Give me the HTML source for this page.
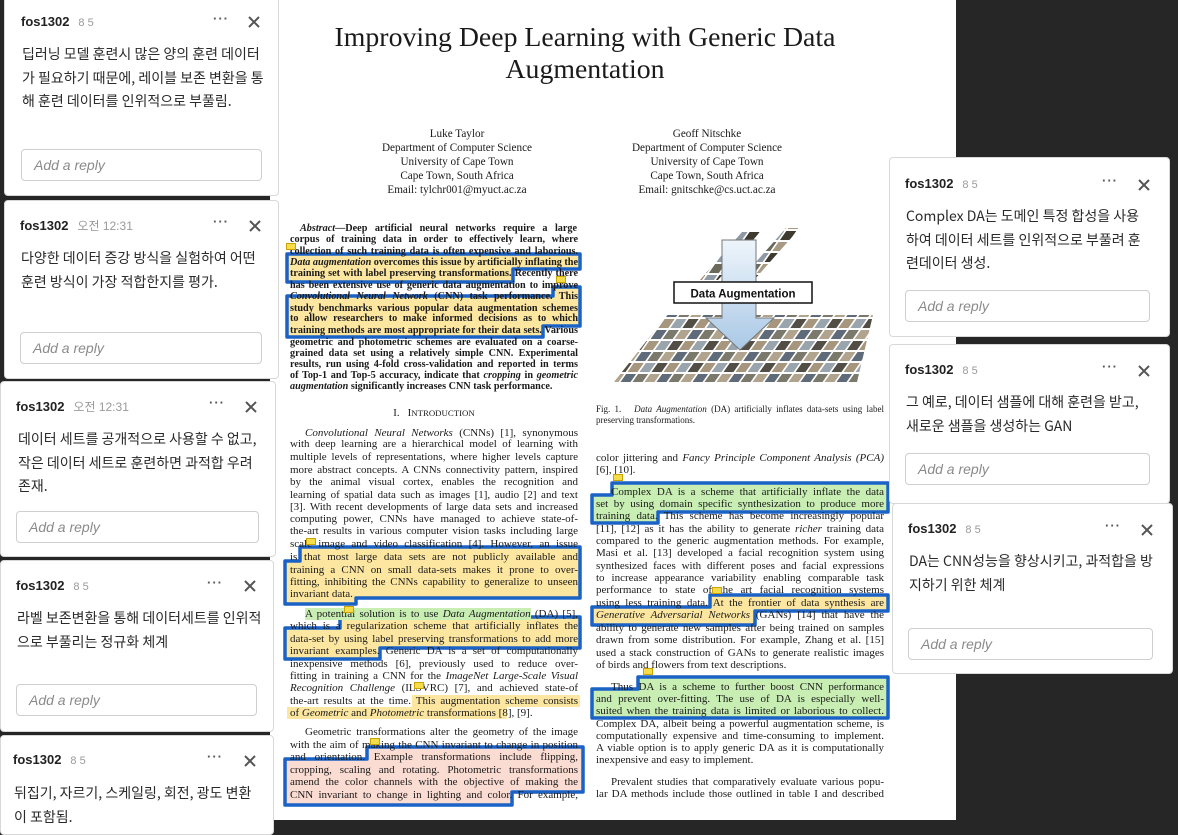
<!DOCTYPE html>
<html><head><meta charset="utf-8">
<style>
*{margin:0;padding:0;box-sizing:border-box}
body{width:1178px;height:820px;overflow:hidden;background:#262626;position:relative;font-family:"Liberation Serif",serif;color:#111}
#paper{position:absolute;left:270px;top:0;width:686px;height:820px;background:#fff}
.l{position:absolute;width:288px;height:14px;font-size:11px;line-height:12px;white-space:nowrap;text-align:justify;text-align-last:justify;color:#1a1a1a;z-index:3}
.l.n{text-align-last:left}
.b{font-weight:bold;font-size:10.2px}
.c{position:absolute;text-align:center;font-size:11.2px;line-height:14px;color:#1a1a1a;z-index:3}
.card{position:absolute;background:#fff;border:1px solid #d8d8d8;border-radius:4px;z-index:5;font-family:"Liberation Sans","Noto Sans CJK KR",sans-serif}
.nm{position:absolute;font-weight:bold;font-size:13px;color:#222}
.nm span{font-weight:normal;font-size:11px;color:#9a9a9a;margin-left:9px}
.dots{position:absolute;font-size:13px;color:#555;letter-spacing:1px;font-weight:bold}
.x{position:absolute;width:12px;height:12px}
.tx{position:absolute;font-family:"Noto Sans CJK KR","Liberation Sans",sans-serif;font-size:14px;line-height:23.5px;color:#2a2a2a;width:245px !important;word-break:break-all}
.rp{position:absolute;border:1px solid #cfcfcf;border-radius:4px;height:32px;font-size:14px;font-style:italic;color:#8a8a8a;padding:7px 0 0 12px}
.note{position:absolute;width:10px;height:7px;background:#f4dc4a;border:1px solid #c9a400;z-index:4}
</style></head><body>
<div id="paper"></div>

<svg width="1178" height="820" style="position:absolute;left:0;top:0;z-index:2">
<defs>
<pattern id="tp" width="36" height="22" patternUnits="userSpaceOnUse" patternTransform="skewX(-35)">
<rect x="0" y="0" width="10" height="9" fill="#6b6a5a"/><rect x="12" y="0" width="10" height="9" fill="#a89a82"/><rect x="24" y="0" width="10" height="9" fill="#4e5a6a"/>
<rect x="0" y="11" width="10" height="9" fill="#8f9aa4"/><rect x="12" y="11" width="10" height="9" fill="#3f3a30"/><rect x="24" y="11" width="10" height="9" fill="#9c8a6e"/>
</pattern>
<linearGradient id="ag" x1="0" y1="0" x2="0" y2="1"><stop offset="0" stop-color="#eef5fb"/><stop offset="1" stop-color="#a9c8e6"/></linearGradient>
</defs>
<g stroke="#1a62c6" stroke-width="3.5" stroke-linejoin="round">
<path d="M287,254 H580 V269 H513 V282 H287 Z" fill="#fde7a0"/>
<path d="M553,287 H580 V326 H543 V337 H287 V296 H553 Z" fill="#fde7a0"/>
<path d="M300,547 H580 V598 H356 V604 H285 V561 H300 Z" fill="#fde7a0"/>
<path d="M340,617 H580 V648 H380 V659 H285 V628 H340 Z" fill="#fde7a0"/>
<path d="M367,747 H583 V792 H512 V805 H285 V759 H367 Z" fill="#fbdcd2"/>
<path d="M612,483 H888 V512 H658 V523 H592 V495 H612 Z" fill="#c8eeb4"/>
<path d="M710,595 H888 V611 H755 V625 H592 V607 H710 Z" fill="#fde7a0"/>
<path d="M638,677 H888 V718 H592 V689 H638 Z" fill="#c8eeb4"/>
</g>
<rect x="305" y="608" width="226" height="12" fill="#c8eeb4"/>
<rect x="412" y="695" width="168" height="12" fill="#fde7a0"/>
<rect x="287" y="707" width="220" height="12" fill="#fde7a0"/>
<polygon points="614,382 857,382 873,315 667,315" fill="url(#tp)" opacity="0.9"/>
<polygon points="700,280 742,232 760,232 718,280" fill="url(#tp)"/>
<polygon points="740,280 786,228 800,228 754,280" fill="url(#tp)"/>
<polygon points="722,240 756,240 756,318 774,318 740,350 706,318 722,318 Z" fill="url(#ag)" stroke="#777" stroke-width="1"/>
<rect x="674" y="282" width="138" height="21" fill="#fff" stroke="#111" stroke-width="1.5"/>
<text x="743" y="297.5" text-anchor="middle" font-family="Liberation Sans" font-weight="bold" font-size="11.5" fill="#111">Data Augmentation</text>
</svg>

<div class="note" style="left:286px;top:243px"></div>
<div class="note" style="left:556px;top:276px"></div>
<div class="note" style="left:306px;top:538px"></div>
<div class="note" style="left:344px;top:606px"></div>
<div class="note" style="left:414px;top:682px"></div>
<div class="note" style="left:370px;top:738px"></div>
<div class="note" style="left:613px;top:474px"></div>
<div class="note" style="left:712px;top:587px"></div>
<div class="note" style="left:643px;top:668px"></div>

<div class="c" style="left:285px;top:22px;width:600px;font-size:27.8px;line-height:32px">Improving Deep Learning with Generic Data<br>Augmentation</div>
<div class="c" style="left:352px;top:127px;width:210px">Luke Taylor<br>Department of Computer Science<br>University of Cape Town<br>Cape Town, South Africa<br>Email: tylchr001@myuct.ac.za</div>
<div class="c" style="left:602px;top:127px;width:210px">Geoff Nitschke<br>Department of Computer Science<br>University of Cape Town<br>Cape Town, South Africa<br>Email: gnitschke@cs.uct.ac.za</div>

<div class="l b" style="left:300px;top:223px;width:277px"><i>Abstract</i>—Deep artificial neural networks require a large</div>
<div class="l b" style="left:290px;top:234px">corpus of training data in order to effectively learn, where</div>
<div class="l b" style="left:290px;top:246px">collection of such training data is often expensive and laborious.</div>
<div class="l b" style="left:290px;top:257px"><i>Data augmentation</i> overcomes this issue by artificially inflating the</div>
<div class="l b" style="left:290px;top:268px">training set with label preserving transformations. Recently there</div>
<div class="l b" style="left:290px;top:280px">has been extensive use of generic data augmentation to improve</div>
<div class="l b" style="left:290px;top:291px"><i>Convolutional Neural Network</i> (CNN) task performance. This</div>
<div class="l b" style="left:290px;top:303px">study benchmarks various popular data augmentation schemes</div>
<div class="l b" style="left:290px;top:313px">to allow researchers to make informed decisions as to which</div>
<div class="l b" style="left:290px;top:325px">training methods are most appropriate for their data sets. Various</div>
<div class="l b" style="left:290px;top:337px">geometric and photometric schemes are evaluated on a coarse-</div>
<div class="l b" style="left:290px;top:348px">grained data set using a relatively simple CNN. Experimental</div>
<div class="l b" style="left:290px;top:359px">results, run using 4-fold cross-validation and reported in terms</div>
<div class="l b" style="left:290px;top:370px">of Top-1 and Top-5 accuracy, indicate that <i>cropping</i> in <i>geometric</i></div>
<div class="l b n" style="left:290px;top:381px"><i>augmentation</i> significantly increases CNN task performance.</div>

<div class="c" style="left:334px;top:406px;width:200px;font-size:10.8px">I.&nbsp;&nbsp;&nbsp;I<span style="font-size:8.8px">NTRODUCTION</span></div>

<div class="l" style="left:305px;top:427px;width:273px"><i>Convolutional Neural Networks</i> (CNNs) [1], synonymous</div>
<div class="l" style="left:290px;top:438px">with deep learning are a hierarchical model of learning with</div>
<div class="l" style="left:290px;top:451px">multiple levels of representations, where higher levels capture</div>
<div class="l" style="left:290px;top:464px">more abstract concepts. A CNNs connectivity pattern, inspired</div>
<div class="l" style="left:290px;top:476px">by the animal visual cortex, enables the recognition and</div>
<div class="l" style="left:290px;top:489px">learning of spatial data such as images [1], audio [2] and text</div>
<div class="l" style="left:290px;top:501px">[3]. With recent developments of large data sets and increased</div>
<div class="l" style="left:290px;top:513px">computing power, CNNs have managed to achieve state-of-</div>
<div class="l" style="left:290px;top:525px">the-art results in various computer vision tasks including large</div>
<div class="l" style="left:290px;top:538px">scale image and video classification [4]. However, an issue</div>
<div class="l" style="left:290px;top:551px">is that most large data sets are not publicly available and</div>
<div class="l" style="left:290px;top:564px">training a CNN on small data-sets makes it prone to over-</div>
<div class="l" style="left:290px;top:576px">fitting, inhibiting the CNNs capability to generalize to unseen</div>
<div class="l n" style="left:290px;top:588px">invariant data.</div>
<div class="l" style="left:305px;top:608px;width:273px">A potential solution is to use <i>Data Augmentation</i> (DA) [5],</div>
<div class="l" style="left:290px;top:620px">which is a regularization scheme that artificially inflates the</div>
<div class="l" style="left:290px;top:633px">data-set by using label preserving transformations to add more</div>
<div class="l" style="left:290px;top:645px">invariant examples. Generic DA is a set of computationally</div>
<div class="l" style="left:290px;top:658px">inexpensive methods [6], previously used to reduce over-</div>
<div class="l" style="left:290px;top:670px">fitting in training a CNN for the <i>ImageNet Large-Scale Visual</i></div>
<div class="l" style="left:290px;top:682px"><i>Recognition Challenge</i> (ILSVRC) [7], and achieved state-of</div>
<div class="l" style="left:290px;top:695px">the-art results at the time. This augmentation scheme consists</div>
<div class="l n" style="left:290px;top:707px">of <i>Geometric</i> and <i>Photometric</i> transformations [8], [9].</div>
<div class="l" style="left:305px;top:726px;width:273px">Geometric transformations alter the geometry of the image</div>
<div class="l" style="left:290px;top:739px">with the aim of making the CNN invariant to change in position</div>
<div class="l" style="left:290px;top:751px">and orientation. Example transformations include flipping,</div>
<div class="l" style="left:290px;top:764px">cropping, scaling and rotating. Photometric transformations</div>
<div class="l" style="left:290px;top:776px">amend the color channels with the objective of making the</div>
<div class="l" style="left:290px;top:789px">CNN invariant to change in lighting and color. For example,</div>

<div class="l" style="left:596px;top:404px;font-size:9px;line-height:11px">Fig. 1.&nbsp;&nbsp;&nbsp;<i>Data Augmentation</i> (DA) artificially inflates data-sets using label</div>
<div class="l n" style="left:596px;top:415px;font-size:9px;line-height:11px">preserving transformations.</div>

<div class="l" style="left:596px;top:452px">color jittering and <i>Fancy Principle Component Analysis (PCA)</i></div>
<div class="l n" style="left:596px;top:464px">[6], [10].</div>
<div class="l" style="left:611px;top:486px;width:273px">Complex DA is a scheme that artificially inflate the data</div>
<div class="l" style="left:596px;top:498px">set by using domain specific synthesization to produce more</div>
<div class="l" style="left:596px;top:510px">training data. This scheme has become increasingly popular</div>
<div class="l" style="left:596px;top:523px">[11], [12] as it has the ability to generate <i>richer</i> training data</div>
<div class="l" style="left:596px;top:535px">compared to the generic augmentation methods. For example,</div>
<div class="l" style="left:596px;top:547px">Masi et al. [13] developed a facial recognition system using</div>
<div class="l" style="left:596px;top:560px">synthesized faces with different poses and facial expressions</div>
<div class="l" style="left:596px;top:572px">to increase appearance variability enabling comparable task</div>
<div class="l" style="left:596px;top:584px">performance to state of the art facial recognition systems</div>
<div class="l" style="left:596px;top:597px">using less training data. At the frontier of data synthesis are</div>
<div class="l" style="left:596px;top:609px"><i>Generative Adversarial Networks</i> (GANs) [14] that have the</div>
<div class="l" style="left:596px;top:622px">ability to generate new samples after being trained on samples</div>
<div class="l" style="left:596px;top:634px">drawn from some distribution. For example, Zhang et al. [15]</div>
<div class="l" style="left:596px;top:647px">used a stack construction of GANs to generate realistic images</div>
<div class="l n" style="left:596px;top:659px">of birds and flowers from text descriptions.</div>
<div class="l" style="left:611px;top:681px;width:273px">Thus DA is a scheme to further boost CNN performance</div>
<div class="l" style="left:596px;top:693px">and prevent over-fitting. The use of DA is especially well-</div>
<div class="l" style="left:596px;top:705px">suited when the training data is limited or laborious to collect.</div>
<div class="l" style="left:596px;top:718px">Complex DA, albeit being a powerful augmentation scheme, is</div>
<div class="l" style="left:596px;top:730px">computationally expensive and time-consuming to implement.</div>
<div class="l" style="left:596px;top:742px">A viable option is to apply generic DA as it is computationally</div>
<div class="l n" style="left:596px;top:754px">inexpensive and easy to implement.</div>
<div class="l" style="left:611px;top:776px;width:273px">Prevalent studies that comparatively evaluate various popu-</div>
<div class="l" style="left:596px;top:788px">lar DA methods include those outlined in table I and described</div>

<div class="card" style="left:4px;top:-4px;width:275px;height:200px">
 <div class="nm" style="left:16px;top:17px">fos1302<span>8 5</span></div>
 <div class="dots" style="left:208px;top:14px">···</div>
 <svg class="x" style="left:243px;top:19px" viewBox="0 0 12 12"><path d="M1,1 L11,11 M11,1 L1,11" stroke="#555" stroke-width="2"/></svg>
 <div class="tx" style="left:17px;top:46px">딥러닝 모델 훈련시 많은 양의 훈련 데이터가 필요하기 때문에, 레이블 보존 변환을 통해 훈련 데이터를 인위적으로 부풀림.</div>
 <div class="rp" style="left:16px;top:152px;width:241px">Add a reply</div>
</div>
<div class="card" style="left:4px;top:200px;width:275px;height:179px">
 <div class="nm" style="left:15px;top:16px">fos1302<span style="font-size:12px">오전 12:31</span></div>
 <div class="dots" style="left:208px;top:13px">···</div>
 <svg class="x" style="left:244px;top:19px" viewBox="0 0 12 12"><path d="M1,1 L11,11 M11,1 L1,11" stroke="#555" stroke-width="2"/></svg>
 <div class="tx" style="left:16px;top:46px">다양한 데이터 증강 방식을 실험하여 어떤 훈련 방식이 가장 적합한지를 평가.</div>
 <div class="rp" style="left:15px;top:131px;width:242px">Add a reply</div>
</div>
<div class="card" style="left:0px;top:381px;width:276px;height:176px">
 <div class="nm" style="left:15px;top:16px">fos1302<span style="font-size:12px">오전 12:31</span></div>
 <div class="dots" style="left:208px;top:13px">···</div>
 <svg class="x" style="left:244px;top:19px" viewBox="0 0 12 12"><path d="M1,1 L11,11 M11,1 L1,11" stroke="#555" stroke-width="2"/></svg>
 <div class="tx" style="left:17px;top:46px">데이터 세트를 공개적으로 사용할 수 없고, 작은 데이터 세트로 훈련하면 과적합 우려 존재.</div>
 <div class="rp" style="left:15px;top:129px;width:243px">Add a reply</div>
</div>
<div class="card" style="left:0px;top:560px;width:274px;height:172px">
 <div class="nm" style="left:15px;top:17px">fos1302<span>8 5</span></div>
 <div class="dots" style="left:206px;top:14px">···</div>
 <svg class="x" style="left:243px;top:19px" viewBox="0 0 12 12"><path d="M1,1 L11,11 M11,1 L1,11" stroke="#555" stroke-width="2"/></svg>
 <div class="tx" style="left:16px;top:46px">라벨 보존변환을 통해 데이터세트를 인위적으로 부풀리는 정규화 체계</div>
 <div class="rp" style="left:15px;top:123px;width:241px">Add a reply</div>
</div>
<div class="card" style="left:0px;top:735px;width:274px;height:100px">
 <div class="nm" style="left:12px;top:16px">fos1302<span>8 5</span></div>
 <div class="dots" style="left:206px;top:13px">···</div>
 <svg class="x" style="left:243px;top:19px" viewBox="0 0 12 12"><path d="M1,1 L11,11 M11,1 L1,11" stroke="#555" stroke-width="2"/></svg>
 <div class="tx" style="left:13px;top:46px">뒤집기, 자르기, 스케일링, 회전, 광도 변환이 포함됨.</div>
</div>

<div class="card" style="left:889px;top:157px;width:281px;height:180px">
 <div class="nm" style="left:15px;top:18px">fos1302<span>8 5</span></div>
 <div class="dots" style="left:212px;top:15px">···</div>
 <svg class="x" style="left:248px;top:21px" viewBox="0 0 12 12"><path d="M1,1 L11,11 M11,1 L1,11" stroke="#555" stroke-width="2"/></svg>
 <div class="tx" style="left:16px;top:47px">Complex DA는 도메인 특정 합성을 사용하여 데이터 세트를 인위적으로 부풀려 훈련데이터 생성.</div>
 <div class="rp" style="left:15px;top:132px;width:245px">Add a reply</div>
</div>
<div class="card" style="left:889px;top:344px;width:281px;height:160px">
 <div class="nm" style="left:15px;top:17px">fos1302<span>8 5</span></div>
 <div class="dots" style="left:212px;top:14px">···</div>
 <svg class="x" style="left:248px;top:20px" viewBox="0 0 12 12"><path d="M1,1 L11,11 M11,1 L1,11" stroke="#555" stroke-width="2"/></svg>
 <div class="tx" style="left:16px;top:46px">그 예로, 데이터 샘플에 대해 훈련을 받고, 새로운 샘플을 생성하는 GAN</div>
 <div class="rp" style="left:15px;top:108px;width:245px">Add a reply</div>
</div>
<div class="card" style="left:892px;top:503px;width:281px;height:171px">
 <div class="nm" style="left:15px;top:17px">fos1302<span>8 5</span></div>
 <div class="dots" style="left:212px;top:14px">···</div>
 <svg class="x" style="left:248px;top:20px" viewBox="0 0 12 12"><path d="M1,1 L11,11 M11,1 L1,11" stroke="#555" stroke-width="2"/></svg>
 <div class="tx" style="left:16px;top:46px">DA는 CNN성능을 향상시키고, 과적합을 방지하기 위한 체계</div>
 <div class="rp" style="left:15px;top:124px;width:245px">Add a reply</div>
</div>
</body></html>
